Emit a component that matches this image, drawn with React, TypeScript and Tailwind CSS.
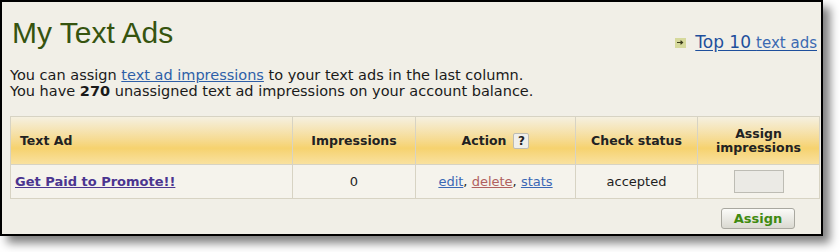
import type { ReactNode } from "react";

const cols = ["w-[282px]", "w-[123px]", "w-[160px]", "w-[122px]", "w-[122px]"];

const HeadCell = ({ children, left }: { children: ReactNode; left?: boolean }) => (
  <th
    className={`h-[48px] border border-[#d7d3c3] px-[9px] align-middle text-[12.5px] font-bold leading-[14px] text-[#222] ${
      left ? "text-left" : "text-center"
    }`}
  >
    {children}
  </th>
);

const Cell = ({ children, left }: { children: ReactNode; left?: boolean }) => (
  <td
    className={`h-[34px] border border-[#d7d3c3] bg-[#f5f3ec] px-[4px] align-middle text-[13px] text-[#1e1e1e] ${
      left ? "text-left" : "text-center"
    }`}
  >
    {children}
  </td>
);

export default function App() {
  return (
    <div className="h-[252px] w-[840px] bg-white font-['DejaVu_Sans',Verdana,sans-serif]">
      <div className="h-[236px] w-[823px] border-2 border-black bg-[#f1efe7] shadow-[7px_7px_9px_rgba(0,0,0,0.5)]">
        {/* heading */}
        <div className="flex items-start justify-between pl-[10px] pr-[4px] pt-[16px]">
          <h1 className="font-['Liberation_Sans',Arial,sans-serif] text-[30px] leading-none font-normal text-[#36540f]">
            My Text Ads
          </h1>
          <div className="mt-[16px] flex items-center gap-[9px]">
            <span className="flex h-[10px] w-[11px] items-center justify-center bg-[#d6d99c]">
              <svg width="7" height="5" viewBox="0 0 7 5">
                <path d="M0 2.5h5M3.5 0.8 5.5 2.5 3.5 4.2" stroke="#3a3a1a" strokeWidth="1.2" fill="none" />
              </svg>
            </span>
            <a href="#" className="leading-none text-[#1e4f9c] underline underline-offset-2">
              <span className="text-[17px]">Top 10</span>{" "}
              <span className="text-[15px] text-[#3b6ab2]">text ads</span>
            </a>
          </div>
        </div>

        {/* intro */}
        <p className="ml-[8px] mt-[16px] text-[14.5px] leading-[16px] text-[#1a1a1a]">
          You can assign{" "}
          <a href="#" className="text-[#2e5fa8] underline">
            text ad impressions
          </a>{" "}
          to your text ads in the last column.
          <br />
          You have <b>270</b> unassigned text ad impressions on your account balance.
        </p>

        {/* table */}
        <table className="ml-[8px] mt-[17px] w-[809px] table-fixed border-collapse">
          <colgroup>
            {cols.map((c, i) => (
              <col key={i} className={c} />
            ))}
          </colgroup>
          <thead>
            <tr className="bg-linear-to-b from-[#f5f0e0] via-[#f6d26e] via-65% to-[#f9e2a2]">
              <HeadCell left>Text Ad</HeadCell>
              <HeadCell>Impressions</HeadCell>
              <HeadCell>
                <span className="inline-flex items-center gap-[7px]">
                  Action
                  <span className="flex h-[16px] w-[16px] items-center justify-center rounded-[2px] border border-[#bdbcb3] bg-[#f0efea] text-[12px] font-bold">
                    ?
                  </span>
                </span>
              </HeadCell>
              <HeadCell>Check status</HeadCell>
              <HeadCell>
                Assign
                <br />
                impressions
              </HeadCell>
            </tr>
          </thead>
          <tbody>
            <tr>
              <Cell left>
                <a href="#" className="font-bold text-[#4b3590] underline">
                  Get Paid to Promote!!
                </a>
              </Cell>
              <Cell>0</Cell>
              <Cell>
                <a href="#" className="text-[#3b68b5] underline">
                  edit
                </a>
                ,{" "}
                <a href="#" className="text-[#b0605f] underline">
                  delete
                </a>
                ,{" "}
                <a href="#" className="text-[#3b68b5] underline">
                  stats
                </a>
              </Cell>
              <Cell>accepted</Cell>
              <Cell>
                <input
                  type="text"
                  className="h-[23px] w-[50px] border border-[#bdbcb4] bg-[#ebeae5] align-middle outline-none"
                />
              </Cell>
            </tr>
          </tbody>
        </table>

        <div className="ml-[8px] mt-[9px] flex w-[809px] justify-end pr-[24px]">
          <button className="h-[21px] w-[74px] rounded-[3px] border border-[#a9a8a0] bg-linear-to-b from-[#fbfbf8] to-[#dad9d1] text-[13px] font-bold leading-none text-[#3f8a10]">
            Assign
          </button>
        </div>
      </div>
    </div>
  );
}
